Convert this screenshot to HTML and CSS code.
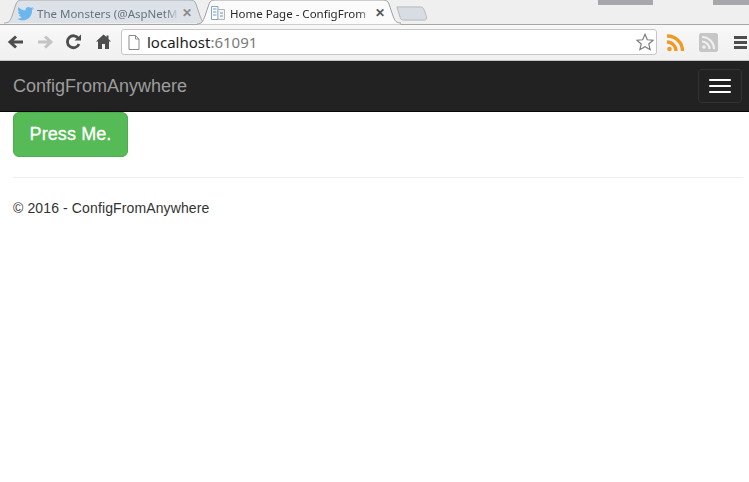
FILE: index.html
```html
<!DOCTYPE html>
<html lang="en">
<head>
<meta charset="utf-8">
<title>Home Page - ConfigFromAnywhere</title>
<link rel="stylesheet" href="styles.css">
</head>
<body>
<div class="chrome">
  <div class="tabstrip">
    <div class="tab tab-inactive">
      <svg class="tab-shape" width="204" height="25" viewBox="0 0 204 25"><path d="M0 24 C5 24 6 22 8 17 L12 5 C13 2 15 1 18 1 L186 1 C189 1 191 2 192 5 L196 17 C198 22 199 24 204 24" fill="#dde2e8" stroke="#a9a9a9"/></svg>
      <svg class="favicon" width="17" height="15" viewBox="0 0 17 15"><path d="M17 2 C16 2.8 15.5 3 15 3 C15.6 2.5 16 2 16 1 C15 1.7 14.5 1.8 14 2 C12 0 8 1 8.500 4.500 C6 4.500 3 3 1.500 1 C.5 3 1 5 2.500 6 C2 6 1.500 6 1 5.500 C1 7.500 2 8.500 4 9 L2 9 C2.500 10.500 4 11 5 11.200 C4 12 2 13 0 12.800 C8 17 15.500 12 15 4 C16 3.500 16.500 3 17 2Z" fill="#6bb6ee"/></svg>
      <span class="tab-title">The Monsters (@AspNetM</span>
      <span class="tab-close tab-close-dim">✕</span>
    </div>
    <div class="tab tab-active">
      <svg class="tab-shape" width="204" height="26" viewBox="0 0 204 26"><path d="M0 25 C5 25 6 22 8 17 L12 5 C13 2 15 1 18 1 L186 1 C189 1 191 2 192 5 L196 17 C198 22 199 24 204 24 L204 26 L0 26Z" fill="#fbfbfb" stroke="#a0a0a0"/></svg>
      <svg class="favicon" width="16" height="16" viewBox="0 0 16 16"><path d="M1.500 1.500 H8 V14.500 H1.500Z" fill="#fff" stroke="#7fa6c9"/><path d="M8 4.500 H14.500 V14.500 H8Z" fill="#f4f4f4" stroke="#b5b5b5"/><path d="M3 4 H6.500 M3 7 H6.500 M3 10 H6.500 M10 8 H13 M10 11 H13" stroke="#6f9cc4"/></svg>
      <span class="tab-title tab-title-active">Home Page - ConfigFrom</span>
      <span class="tab-close">✕</span>
    </div>
    <svg class="newtab" width="32" height="17" viewBox="0 0 34 17"><path d="M1 1.500 H26 C28 1.500 29 2.500 30 5 L32.500 12 C33 14 32 15.500 30 15.500 H8 C6 15.500 5 14.500 4.500 13Z" fill="#d8dde4" stroke="#b4b4b4"/></svg>
    <div class="window-marks">
      <span class="mark mark-wide"></span>
      <span class="mark mark-narrow"></span>
    </div>
  </div>
  <div class="toolbar">
    <svg class="tool" width="18" height="16" viewBox="0 0 18 16"><path d="M16 8 H4 M9 2.500 L3 8 L9 13.500" fill="none" stroke="#4d4d4d" stroke-width="3"/></svg>
    <svg class="tool" width="18" height="16" viewBox="0 0 18 16"><path d="M2 8 H14 M9 2.500 L15 8 L9 13.500" fill="none" stroke="#c4c4c4" stroke-width="3"/></svg>
    <svg class="tool tool-reload" width="17" height="16" viewBox="0 0 17 16"><path d="M13.500 4.500 A6 6 0 1 0 14 10" fill="none" stroke="#4d4d4d" stroke-width="2.800"/><path d="M9.500 6.500 H16 V0.500Z" fill="#4d4d4d"/></svg>
    <svg class="tool tool-home" width="15" height="16" viewBox="0 0 15 16"><path d="M7.500 .5 L0 7.500 L2 7.500 V15 H6 V10 H9 V15 H13 V7.500 H15 L12.500 5 V1.500 H10.500 V3Z" fill="#4d4d4d"/></svg>
    <div class="omnibox">
      <svg class="page-icon" width="12" height="15" viewBox="0 0 12 15"><path d="M1 .5 H7.500 L11 4 V14.500 H1Z M7.500 .5 V4 H11" fill="#fff" stroke="#8a8a8a"/></svg>
      <span class="url">localhost<span class="url-port">:61091</span></span>
      <svg class="star" width="18" height="18" viewBox="0 0 20 19"><path d="M10 1 L12.600 7 L19 7.600 L14.200 11.800 L15.700 18 L10 14.700 L4.300 18 L5.800 11.800 L1 7.600 L7.400 7Z" fill="#fff" stroke="#7c7c7c" stroke-width="1.300"/></svg>
    </div>
    <svg class="rss" width="19" height="19" viewBox="0 0 19 19"><circle cx="2.500" cy="16" r="2.300" fill="#f09a24"/><path d="M0 9 A9 9 0 0 1 9 18 M0 3 A15 15 0 0 1 15.500 18" fill="none" stroke="#f09a24" stroke-width="3.300"/></svg>
    <svg class="rss-grey" width="19" height="19" viewBox="0 0 19 19"><rect width="19" height="19" rx="2.500" fill="#c6c6c6"/><circle cx="5" cy="14" r="1.800" fill="#f0f0f0"/><path d="M3 8.500 A7.500 7.500 0 0 1 10.500 16 M3 4 A12 12 0 0 1 15 16" fill="none" stroke="#f0f0f0" stroke-width="2.200"/></svg>
    <div class="menu-icon"><span></span><span></span><span></span></div>
  </div>
</div>
<nav class="navbar">
  <a class="brand">ConfigFromAnywhere</a>
  <button class="toggle" type="button"><span></span><span></span><span></span></button>
</nav>
<main class="content">
  <button class="press" type="button">Press Me.</button>
  <hr class="rule">
  <footer class="footer">© 2016 - ConfigFromAnywhere</footer>
</main>
</body>
</html>
```
FILE: styles.css
```css
* { box-sizing: border-box; }
html, body { margin: 0; padding: 0; background: #fff; }
body { width: 749px; height: 482px; overflow: hidden; font-family: "Liberation Sans", Arial, sans-serif; color: #333; font-size: 14px; }

.chrome { background: #f2f2f2; height: 61px; border-bottom: 1px solid #c4c4c4; }
.tabstrip { position: relative; height: 25px; display: flex; align-items: flex-end; padding-left: 4px; background: #efefef; border-bottom: 1px solid #a6a6a6; }
.tab { position: relative; width: 204px; height: 24px; display: flex; align-items: center; padding: 2px 0 0 13px; margin-right: -11px; }
.tab-shape { position: absolute; left: 0; top: -1px; }
.tab > .favicon, .tab > span { position: relative; }
.tab-title { font-family: "Noto Sans", "Open Sans", sans-serif; font-size: 11.500px; color: #66727f; margin-left: 3px; width: 143px; white-space: nowrap; overflow: hidden; -webkit-mask-image: linear-gradient(to right, #000 128px, transparent 143px); mask-image: linear-gradient(to right, #000 128px, transparent 143px); }
.tab-title-active { color: #2a2a2a; margin-left: 4px; }
.tab-close { font-size: 12px; font-weight: bold; color: #555; margin-left: 2px; }
.tab-close-dim { color: #8a8a8a; }
.newtab { position: relative; flex: none; margin: 0 0 2px 6px; }
.window-marks { position: absolute; right: 0; top: 0; display: flex; gap: 60px; }
.mark { height: 5px; background: #a6a6ab; display: block; }
.mark-wide { width: 55px; }
.mark-narrow { width: 36px; }

.toolbar { height: 35px; display: flex; align-items: center; padding: 0 0 1px 7px; background: linear-gradient(#f8f8f8, #f0f0f0); }
.tool { margin-right: 11px; flex: none; }
.tool-reload { margin-right: 14px; }
.tool-home { margin-right: 10px; }
.omnibox { flex: none; width: 536px; height: 26px; background: #fff; border: 1px solid #c6c6c6; border-radius: 3px; display: flex; align-items: center; padding: 0 0 0 6px; }
.page-icon { flex: none; }
.url { font-family: "Noto Sans", "Open Sans", sans-serif; font-size: 15px; color: #1d1d1d; margin-left: 7px; flex: 1; }
.url-port { color: #7a7a7a; }
.star { margin-right: 2px; flex: none; }
.rss { margin-left: 10px; flex: none; }
.rss-grey { margin-left: 13px; flex: none; }
.menu-icon { margin-left: 16px; flex: none; width: 13px; display: flex; flex-direction: column; gap: 2px; }
.menu-icon span { display: block; height: 3px; background: #4d4d4d; }

.navbar { height: 51px; background: #222; border-bottom: 1px solid #080808; display: flex; align-items: center; justify-content: space-between; padding: 0 6px 0 13px; }
.brand { font-size: 18px; color: #9d9d9d; }
.toggle { width: 44px; height: 34px; background: transparent; border: 1px solid #333; border-radius: 4px; padding: 9px 10px; display: flex; flex-direction: column; gap: 4px; margin-right: 1px; }
.toggle span { display: block; width: 22px; height: 2px; background: #fff; border-radius: 1px; }

.content { padding: 0 6px 0 13px; }
.press { display: block; width: 115px; height: 45px; padding: 0; white-space: nowrap; background: #56ba56; border: 1px solid #4cae4c; border-radius: 6px; color: #fff; font: 18px/1.333 "Liberation Sans", Arial, sans-serif; letter-spacing: .1px; -webkit-text-stroke: .3px #fff; }
.rule { border: 0; border-top: 1px solid #eee; margin: 20px 0; }
.footer { font-size: 14px; line-height: 20px; letter-spacing: .12px; }
```
